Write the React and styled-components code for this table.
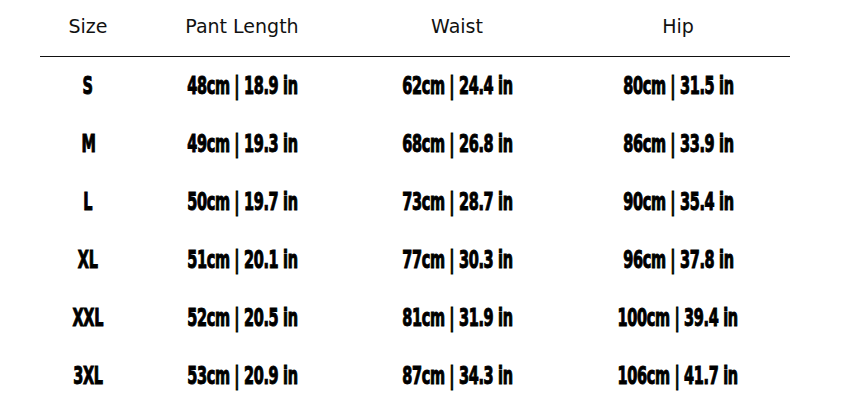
import React from 'react';
import styled, { createGlobalStyle } from 'styled-components';

const GlobalStyle = createGlobalStyle`
  html, body {
    margin: 0;
    padding: 0;
    background: #fff;
  }
`;

const Page = styled.div`
  width: 868px;
  height: 417px;
  background: #fff;
  padding: 0 0 0 40px;
  box-sizing: border-box;
`;

const Table = styled.div`
  width: 750px;
  display: grid;
  grid-template-columns: 96px 212px 218px 224px;
`;

const HeadCell = styled.div`
  height: 57px;
  display: flex;
  align-items: center;
  justify-content: center;
  padding-bottom: 4px;
  box-sizing: border-box;
  border-bottom: 1px solid #111;
  font-family: "DejaVu Sans", Verdana, sans-serif;
  font-size: 19px;
  color: #111;
`;

const Cell = styled.div`
  height: 58px;
  display: flex;
  align-items: center;
  justify-content: center;
  font-family: "Liberation Sans Narrow", "DejaVu Sans Condensed", "Liberation Sans", sans-serif;
  font-weight: 700;
  font-size: 24px;
  letter-spacing: -0.5px;
  color: #000;
  box-sizing: border-box;
`;

const Squeeze = styled.span`
  display: inline-block;
  white-space: nowrap;
  transform: scaleX(0.67);
  -webkit-text-stroke: 1px #000;
`;

const rows = [
  ['S', '48cm | 18.9 in', '62cm | 24.4 in', '80cm | 31.5 in'],
  ['M', '49cm | 19.3 in', '68cm | 26.8 in', '86cm | 33.9 in'],
  ['L', '50cm | 19.7 in', '73cm | 28.7 in', '90cm | 35.4 in'],
  ['XL', '51cm | 20.1 in', '77cm | 30.3 in', '96cm | 37.8 in'],
  ['XXL', '52cm | 20.5 in', '81cm | 31.9 in', '100cm | 39.4 in'],
  ['3XL', '53cm | 20.9 in', '87cm | 34.3 in', '106cm | 41.7 in'],
];

const heads = ['Size', 'Pant Length', 'Waist', 'Hip'];

export default function App() {
  return (
    <Page>
      <GlobalStyle />
      <Table>
        {heads.map((h) => (
          <HeadCell key={h}>{h}</HeadCell>
        ))}
        {rows.map((r) =>
          r.map((v, i) => (
            <Cell key={r[0] + i}>
              <Squeeze>{v}</Squeeze>
            </Cell>
          ))
        )}
      </Table>
    </Page>
  );
}
